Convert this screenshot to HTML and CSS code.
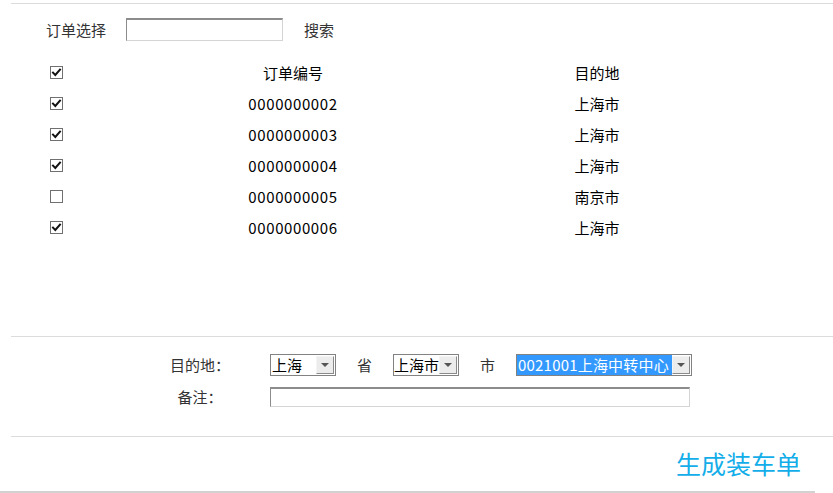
FILE: index.html
```html
<!DOCTYPE html>
<html lang="zh-CN">
<head>
<meta charset="utf-8">
<title>生成装车单</title>
<link rel="stylesheet" href="styles.css">
</head>
<body>
<div class="page">
  <div class="rule rule-top"></div>

  <div class="search">
    <span class="search-label">订单选择</span>
    <input class="search-input" type="text">
    <span class="search-btn">搜索</span>
  </div>

  <div class="orders">
    <div class="row head">
      <span class="cell cell-check"><span class="cb on"><svg viewBox="0 0 11 11"><path d="M2 5.6 L4.3 8 L9 2.6" /></svg></span></span>
      <span class="cell cell-no">订单编号</span>
      <span class="cell cell-dest">目的地</span>
    </div>
    <div class="row">
      <span class="cell cell-check"><span class="cb on"><svg viewBox="0 0 11 11"><path d="M2 5.6 L4.3 8 L9 2.6" /></svg></span></span>
      <span class="cell cell-no num">0000000002</span>
      <span class="cell cell-dest">上海市</span>
    </div>
    <div class="row">
      <span class="cell cell-check"><span class="cb on"><svg viewBox="0 0 11 11"><path d="M2 5.6 L4.3 8 L9 2.6" /></svg></span></span>
      <span class="cell cell-no num">0000000003</span>
      <span class="cell cell-dest">上海市</span>
    </div>
    <div class="row">
      <span class="cell cell-check"><span class="cb on"><svg viewBox="0 0 11 11"><path d="M2 5.6 L4.3 8 L9 2.6" /></svg></span></span>
      <span class="cell cell-no num">0000000004</span>
      <span class="cell cell-dest">上海市</span>
    </div>
    <div class="row">
      <span class="cell cell-check"><span class="cb"></span></span>
      <span class="cell cell-no num">0000000005</span>
      <span class="cell cell-dest">南京市</span>
    </div>
    <div class="row">
      <span class="cell cell-check"><span class="cb on"><svg viewBox="0 0 11 11"><path d="M2 5.6 L4.3 8 L9 2.6" /></svg></span></span>
      <span class="cell cell-no num">0000000006</span>
      <span class="cell cell-dest">上海市</span>
    </div>
  </div>

  <div class="rule"></div>

  <div class="form">
    <div class="form-row row-dest">
      <span class="form-label">目的地：</span>
      <div class="form-field">
        <span class="sel sel-prov"><span class="sel-text">上海</span><span class="sel-btn"><span class="tri"></span></span></span>
        <span class="unit">省</span>
        <span class="sel sel-city"><span class="sel-text">上海市</span><span class="sel-btn"><span class="tri"></span></span></span>
        <span class="unit">市</span>
        <span class="sel sel-center"><span class="sel-text picked">0021001上海中转中心</span><span class="sel-btn"><span class="tri"></span></span></span>
      </div>
    </div>
    <div class="form-row row-note">
      <span class="form-label">备注：</span>
      <div class="form-field">
        <input class="note-input" type="text">
      </div>
    </div>
  </div>

  <div class="rule"></div>

  <div class="actions">
    <span class="make-btn">生成装车单</span>
  </div>

  <div class="bottom-rule"></div>
</div>
</body>
</html>
```

FILE: styles.css
```css
html, body {
  margin: 0;
  padding: 0;
  background: #fff;
}

body {
  font-family: "Microsoft YaHei", "Noto Sans CJK SC", "Noto Sans", sans-serif;
  font-size: 15px;
  color: #000;
}

.page {
  width: 833px;
  height: 493px;
  padding-top: 3px;
  box-sizing: border-box;
  overflow: hidden;
}

.rule {
  margin-left: 11px;
  border-top: 1px solid #dcdcdc;
}

/* search bar */
.search {
  display: flex;
  align-items: center;
  height: 23px;
  margin-top: 14px;
  padding-left: 46px;
  color: #333;
  line-height: 23px;
}

.search-input {
  width: 157px;
  height: 23px;
  box-sizing: border-box;
  margin: 0 0 0 20px;
  padding: 0;
  border-style: solid;
  border-width: 2px 1px 1px 1px;
  border-color: #8c8c8c #d4d4d4 #d4d4d4 #8c8c8c;
  background: #fff;
  outline: none;
}

.search-btn {
  margin-left: 21px;
}

/* order list */
.orders {
  height: 279px;
  margin-top: 16px;
  padding-left: 50px;
}

.row {
  display: grid;
  grid-template-columns: 40px 406px 202px;
  height: 31px;
  align-items: center;
  line-height: 31px;
}

.cell-no,
.cell-dest {
  text-align: center;
}

.num {
  letter-spacing: 0.6px;
}

.cell-check {
  display: flex;
  align-items: center;
}

.cb {
  display: block;
  width: 13px;
  height: 13px;
  box-sizing: border-box;
  border: 1px solid #707070;
  background: #fff;
}

.cb svg {
  display: block;
  width: 11px;
  height: 11px;
}

.cb svg path {
  fill: none;
  stroke: #111;
  stroke-width: 2;
  stroke-linecap: square;
}

/* form */
.form {
  padding-top: 17px;
  color: #333;
}

.form-row {
  display: flex;
  align-items: center;
}

.row-dest {
  height: 22px;
}

.row-note {
  height: 20px;
  margin-top: 11px;
}

.form-label {
  width: 120px;
  margin-left: 140px;
  text-align: center;
  line-height: 20px;
}

.form-field {
  display: flex;
  align-items: center;
  margin-left: 10px;
}

.unit {
  margin: 0 21px;
  line-height: 20px;
}

.sel {
  display: inline-flex;
  align-items: center;
  height: 22px;
  box-sizing: border-box;
  border: 1px solid #828282;
  background: #fff;
  color: #000;
}

.sel-prov { width: 66px; }
.sel-city { width: 66px; }
.sel-center { width: 176px; }

.sel-text {
  flex: 1;
  height: 20px;
  line-height: 20px;
  padding-left: 1px;
  white-space: nowrap;
}

.sel-city .sel-text {
  padding-left: 0;
}

.sel-text.picked {
  background: #3399ff;
  color: #fff;
  letter-spacing: 0.2px;
  overflow: hidden;
}

.sel-btn {
  flex: none;
  width: 18px;
  height: 18px;
  margin-right: 1px;
  box-sizing: border-box;
  border: 1px solid;
  border-color: #f4f4f4 #8a8a8a #8a8a8a #f4f4f4;
  background: #ececec;
  display: flex;
  align-items: center;
  justify-content: center;
}

.tri {
  width: 0;
  height: 0;
  border-left: 4px solid transparent;
  border-right: 4px solid transparent;
  border-top: 4px solid #555;
}

.note-input {
  width: 420px;
  height: 20px;
  box-sizing: border-box;
  margin: 0;
  padding: 0;
  border-style: solid;
  border-width: 2px 1px 1px 1px;
  border-color: #8c8c8c #d4d4d4 #d4d4d4 #8c8c8c;
  background: #fff;
  outline: none;
}

.form + .rule {
  margin-top: 29px;
}

/* actions */
.actions {
  height: 54px;
  display: flex;
  align-items: center;
  justify-content: flex-end;
  padding-right: 32px;
}

.make-btn {
  font-size: 25px;
  line-height: 30px;
  margin-top: -3px;
  color: #13aee9;
  cursor: pointer;
}

.bottom-rule {
  width: 815px;
  border-top: 2px solid #d2d2d2;
}
```
